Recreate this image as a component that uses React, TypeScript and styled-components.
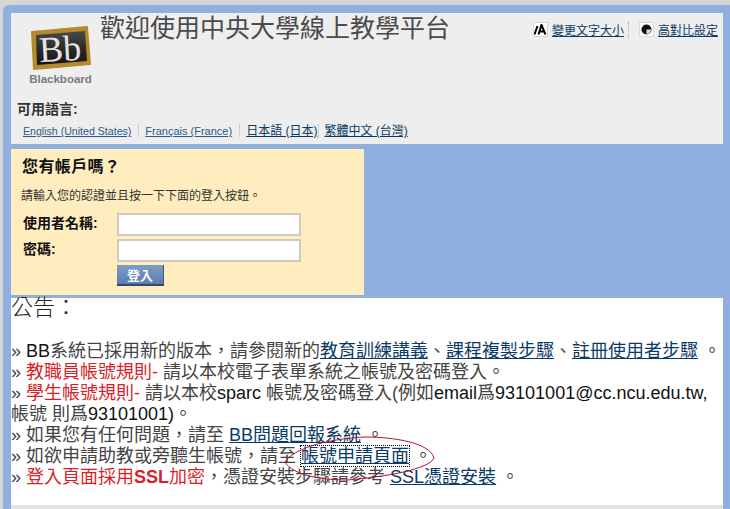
import React from 'react';
import styled, { createGlobalStyle } from 'styled-components';

const GlobalStyle = createGlobalStyle`
  html, body {
    margin: 0;
    padding: 0;
    height: 509px;
    overflow: hidden;
    background: #d6d6d6;
    font-family: "Liberation Sans", "Noto Sans CJK TC", sans-serif;
  }
`;

const Frame = styled.div`
  margin: 5px 0 0 3px;
  height: 504px;
  box-sizing: border-box;
  padding: 8px 7px 0 8px;
  background: #8fafde;
  border-radius: 6px 0 0 0;
  display: flex;
  flex-direction: column;
`;

const Header = styled.div`
  height: 131px;
  flex: none;
  box-sizing: border-box;
  background: #eeeeee;
  padding: 0 5px 0 6px;
  display: flex;
  flex-direction: column;
`;

const HeaderTop = styled.div`
  display: flex;
  align-items: flex-start;
  height: 85px;
`;

const Logo = styled.svg`
  width: 64px;
  height: 72px;
  margin: 9px 0 0 12px;
  flex: none;
`;

const Title = styled.h1`
  margin: 0 0 0 7px;
  font-size: 25px;
  line-height: 30px;
  font-weight: 400;
  color: #4a4a4a;
`;

const Tools = styled.div`
  margin-left: auto;
  margin-top: 8px;
  display: flex;
  align-items: center;
  font-size: 12px;
`;

const ToolIcon = styled.span`
  width: 15px;
  height: 15px;
  box-sizing: border-box;
  margin-right: 4px;
  border: 1px solid #d8d8d8;
  background: #fff;
  display: flex;
  align-items: center;
  justify-content: center;
`;

const ToolDivider = styled.span`
  height: 16px;
  margin: 0 10px 0 4px;
  border-left: 1px dotted #aaa;
`;

const DarkLink = styled.a`
  color: #0b3a66;
  text-decoration: underline;
`;

const LangLabel = styled.div`
  font-size: 14px;
  line-height: 16px;
  font-weight: 700;
  color: #333;
  margin-top: 3px;
`;

const LangRow = styled.div`
  margin: 7px 0 0 6px;
  display: flex;
  align-items: center;
  line-height: 14px;
  white-space: nowrap;
`;

const LangLink = styled(DarkLink)<{ $size: number }>`
  font-size: ${props => props.$size}px;
  color: ${props => (props.$size > 11 ? '#0b3a66' : '#2a5a8a')};
`;

const LangDivider = styled.span<{ $tight?: boolean }>`
  height: 14px;
  margin: ${props => (props.$tight ? '0 5px 0 1px' : '0 6px 0 7px')};
  border-left: 1px dotted #bbb;
`;

const LoginBox = styled.div`
  margin-top: 5px;
  width: 353px;
  height: 146px;
  flex: none;
  box-sizing: border-box;
  background: #ffedbf;
  padding: 8px 0 0 11px;
`;

const LoginTitle = styled.h2`
  margin: 0;
  font-size: 16px;
  line-height: 20px;
  letter-spacing: 0.4px;
  font-weight: 700;
  color: #111;
`;

const LoginHint = styled.p`
  margin: 11px 0 0 -1px;
  font-size: 12px;
  line-height: 16px;
  color: #333;
`;

const FieldRow = styled.div`
  display: flex;
  align-items: center;
  height: 26px;
`;

const Fields = styled.div`
  margin-top: 7px;
`;

const FieldLabel = styled.label`
  width: 95px;
  flex: none;
  box-sizing: border-box;
  padding: 0 0 4px 1px;
  font-size: 14px;
  font-weight: 700;
  color: #111;
`;

const TextInput = styled.input`
  width: 184px;
  height: 23px;
  box-sizing: border-box;
  background: #fff;
  border: 2px solid #cfcbc2;
  padding: 0;
  outline: none;
`;

const SubmitButton = styled.button`
  display: block;
  margin: 2px 0 0 95px;
  width: 47px;
  height: 21px;
  padding: 0 0 2px;
  border: none;
  border-right: 1px solid #3d5a85;
  border-bottom: 2px solid #2f4a72;
  background: linear-gradient(#7f9cc8, #5d7dac);
  color: #fff;
  font-family: inherit;
  font-size: 13px;
  font-weight: 700;
`;

const Announcements = styled.div`
  margin-top: 3px;
  height: 207px;
  flex: none;
  box-sizing: border-box;
  background: #fff;
  position: relative;
`;

const AnnounceTitle = styled.div`
  font-size: 22px;
  line-height: 20px;
  font-weight: 300;
  color: #222;
`;

const AnnounceBody = styled.div`
  margin-top: 23px;
  font-size: 18px;
  line-height: 21px;
  color: #444;
  white-space: nowrap;
`;

const Latin = styled.span`
  color: #111;
`;

const Red = styled.span`
  color: #d81f2a;
`;

const BodyLink = styled(DarkLink)<{ $focused?: boolean }>`
  outline: ${props => (props.$focused ? '1px dotted #000' : 'none')};
`;

const Circle = styled.svg`
  position: absolute;
  left: 269px;
  top: 131px;
  width: 160px;
  height: 56px;
  pointer-events: none;
`;

const Footer = styled.div`
  flex: 1;
  background: #e2e2e2;
`;

const App: React.FC = () => (
  <>
    <GlobalStyle />
    <Frame>
      <Header>
        <HeaderTop>
          <Logo viewBox="0 0 64 72">
            <defs>
              <linearGradient id="bbFace" x1="0" y1="0" x2="0" y2="1">
                <stop offset="0" stopColor="#4a4a4a" />
                <stop offset="0.5" stopColor="#2b2b2b" />
                <stop offset="1" stopColor="#151515" />
              </linearGradient>
            </defs>
            <polygon points="3,10 58,5 61,42 5,47" fill="#b58a2c" stroke="#b58a2c" strokeLinejoin="round" strokeWidth="2" />
            <polygon points="7,13 56,9 58,39 8,43" fill="url(#bbFace)" />
            <text x="31" y="39" textAnchor="middle" fontFamily="Liberation Serif, serif" fontSize="36" fill="#e4e4e4" transform="rotate(-3 31 26)">Bb</text>
            <text x="31.5" y="61" textAnchor="middle" fontFamily="Liberation Sans, sans-serif" fontSize="11.5" fontWeight="700" fill="#7a7a7a">Blackboard</text>
          </Logo>
          <Title>歡迎使用中央大學線上教學平台</Title>
          <Tools>
            <ToolIcon>
              <svg width="13" height="11" viewBox="0 0 13 11">
                <path d="M0.5 10.5L3.5 2M4.5 10.5L7.5 1L11.5 10.5M5.5 7.5H10.5" fill="none" stroke="#000" strokeWidth="2" />
              </svg>
            </ToolIcon>
            <DarkLink href="#">變更文字大小</DarkLink>
            <ToolDivider />
            <ToolIcon>
              <svg width="11" height="11" viewBox="0 0 12 12">
                <circle cx="6" cy="6" r="5.5" fill="#111" />
                <path d="M6 6L11 6A5 5 0 0 1 6 11Z" fill="#ddd" />
              </svg>
            </ToolIcon>
            <DarkLink href="#">高對比設定</DarkLink>
          </Tools>
        </HeaderTop>
        <LangLabel>可用語言:</LangLabel>
        <LangRow>
          <LangLink href="#" $size={10.6}>English (United States)</LangLink>
          <LangDivider />
          <LangLink href="#" $size={11}>Français (France)</LangLink>
          <LangDivider />
          <LangLink href="#" $size={12}>日本語 (日本)</LangLink>
          <LangDivider $tight />
          <LangLink href="#" $size={12}>繁體中文 (台灣)</LangLink>
        </LangRow>
      </Header>
      <LoginBox>
        <LoginTitle>您有帳戶嗎？</LoginTitle>
        <LoginHint>請輸入您的認證並且按一下下面的登入按鈕。</LoginHint>
        <Fields>
          <FieldRow>
            <FieldLabel>使用者名稱:</FieldLabel>
            <TextInput type="text" />
          </FieldRow>
          <FieldRow>
            <FieldLabel>密碼:</FieldLabel>
            <TextInput type="password" />
          </FieldRow>
        </Fields>
        <SubmitButton type="button">登入</SubmitButton>
      </LoginBox>
      <Announcements>
        <AnnounceTitle>公告：</AnnounceTitle>
        <AnnounceBody>
          <div>» <Latin>BB</Latin>系統已採用新的版本，請參閱新的<BodyLink href="#">教育訓練講義</BodyLink>、<BodyLink href="#">課程複製步驟</BodyLink>、<BodyLink href="#">註冊使用者步驟</BodyLink> 。</div>
          <div>» <Red>教職員帳號規則-</Red> 請以本校電子表單系統之帳號及密碼登入。</div>
          <div>» <Red>學生帳號規則-</Red> 請以本校<Latin>sparc</Latin> 帳號及密碼登入(例如<Latin>email</Latin>爲<Latin>93101001@cc.ncu.edu.tw,</Latin></div>
          <div>帳號 則爲<Latin>93101001)</Latin>。</div>
          <div>» 如果您有任何問題，請至 <BodyLink href="#">BB問題回報系統</BodyLink> 。</div>
          <div>» 如欲申請助教或旁聽生帳號，請至 <BodyLink href="#" $focused>帳號申請頁面</BodyLink> 。</div>
          <div>» <Red>登入頁面採用<b>SSL</b>加密</Red>，憑證安裝步驟請參考 <BodyLink href="#">SSL憑證安裝</BodyLink> 。</div>
        </AnnounceBody>
        <Circle viewBox="0 0 160 56">
          <path d="M5 33C13 20 45 10 85 8C115 8 150 14 154 29C150 40 105 48 67 51C40 51 13 46 5 33Z" fill="none" stroke="#b8122a" strokeWidth="1" />
        </Circle>
      </Announcements>
      <Footer />
    </Frame>
  </>
);

export default App;
